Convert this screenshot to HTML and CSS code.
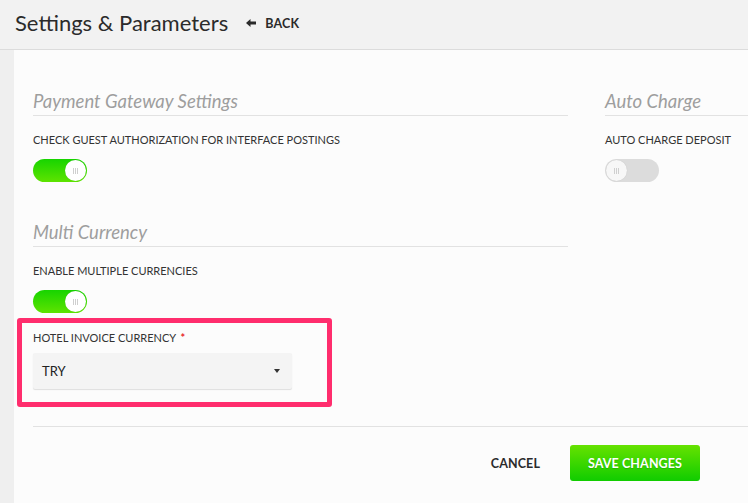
FILE: index.html
```html
<!DOCTYPE html>
<html>
<head>
<meta charset="utf-8">
<link rel="stylesheet" href="styles.css">
</head>
<body>
<header class="topbar">
  <h1 class="title">Settings &amp; Parameters</h1>
  <a class="back"><svg class="arrow" width="10" height="8" viewBox="0 0 10 8"><path d="M0 4 L4.5 0 L4.5 2.6 L10 2.6 L10 5.4 L4.5 5.4 L4.5 8 Z" fill="#2b2b2b"/></svg>BACK</a>
</header>
<div class="main">
  <div class="strip"></div>
  <div class="panel">
    <div class="cols">
      <div class="col-left">
        <section class="group">
          <h2 class="group-title">Payment Gateway Settings</h2>
          <div class="field-label">CHECK GUEST AUTHORIZATION FOR INTERFACE POSTINGS</div>
          <div class="toggle on"><span class="knob"><i></i><i></i><i></i></span></div>
        </section>
        <section class="group group-2">
          <h2 class="group-title">Multi Currency</h2>
          <div class="field-label">ENABLE MULTIPLE CURRENCIES</div>
          <div class="toggle on"><span class="knob"><i></i><i></i><i></i></span></div>
          <div class="highlight">
            <div class="field-label sel-label">HOTEL INVOICE CURRENCY <span class="req">*</span></div>
            <div class="select"><span>TRY</span><span class="caret"></span></div>
          </div>
        </section>
      </div>
      <div class="col-right">
        <section class="group">
          <h2 class="group-title">Auto Charge</h2>
          <div class="field-label">AUTO CHARGE DEPOSIT</div>
          <div class="toggle off"><span class="knob"><i></i><i></i><i></i></span></div>
        </section>
      </div>
    </div>
    <div class="footer">
      <button class="btn-cancel">CANCEL</button>
      <button class="btn-save">SAVE CHANGES</button>
    </div>
  </div>
</div>
</body>
</html>
```
FILE: styles.css
```css
* { box-sizing: border-box; }
html, body { margin: 0; padding: 0; }
body {
  width: 748px;
  height: 503px;
  overflow: hidden;
  font-family: Lato, "Open Sans", sans-serif;
  background: #f1f1f1;
  color: #333;
}
.topbar {
  height: 50px;
  display: flex;
  align-items: center;
  padding-left: 15px;
  background: #f2f2f2;
  border-bottom: 1px solid #dcdcdc;
  box-shadow: 0 1px 0 #f7f7f7;
}
.title {
  margin: 0;
  font-size: 22px;
  font-weight: 400;
  color: #2b2b2b;
  line-height: 26px;
  margin-top: -3px;
}
.back {
  margin-left: 18px;
  margin-top: -3px;
  font-size: 12.5px;
  font-weight: 700;
  color: #2b2b2b;
  display: flex;
  align-items: center;
  letter-spacing: 0.2px;
}
.arrow { margin-right: 9px; }
.main {
  display: flex;
  height: 453px;
}
.strip {
  width: 14px;
  background: #efefef;
}
.panel {
  flex: 1;
  background: #fcfcfc;
  padding: 39px 0 0 19px;
}
.cols {
  display: grid;
  grid-template-columns: 535px 1fr;
  column-gap: 37px;
}
.group-title {
  margin: 0;
  font-size: 18.5px;
  font-style: italic;
  font-weight: 400;
  color: #9e9e9e;
  line-height: 24px;
  padding-bottom: 2px;
  border-bottom: 1px solid #e2e2e2;
}
.field-label {
  font-size: 11px;
  line-height: 14px;
  margin-top: 17px;
  color: #333;
}
.toggle {
  margin-top: 12px;
  width: 54px;
  height: 23px;
  border-radius: 12px;
  position: relative;
}
.toggle.on {
  background: linear-gradient(#17d400, #5ee300);
}
.toggle.off {
  background: #dcdcdc;
}
.knob {
  position: absolute;
  top: 1px;
  width: 21px;
  height: 21px;
  border-radius: 50%;
  background: #fff;
  display: flex;
  justify-content: center;
  align-items: center;
  gap: 1px;
  box-shadow: 0 0 1px rgba(0,0,0,0.15);
}
.toggle.on .knob { right: 1px; }
.toggle.off .knob { left: 1px; background: #f7f7f7; }
.knob i {
  display: block;
  width: 1px;
  height: 6px;
  background: #cfcfcf;
}
.group-2 { margin-top: 38px; }
.highlight {
  margin: 5px 0 0 -16px;
  width: 315px;
  height: 89px;
  border: 5px solid #ff2d6d;
  border-radius: 3px;
  padding: 0 0 0 11px;
}
.sel-label { margin-top: 8px; }
.req { color: #e8262b; font-weight: 700; margin-left: 2px; }
.select {
  margin-top: 8px;
  width: 259px;
  height: 36px;
  background: #f4f4f4;
  border-radius: 2px;
  box-shadow: 0 1px 1px rgba(0,0,0,0.12);
  display: flex;
  align-items: center;
  justify-content: space-between;
  padding: 0 12px 0 9px;
  font-size: 13px;
  color: #222;
}
.caret {
  width: 0;
  height: 0;
  border-left: 3px solid transparent;
  border-right: 3px solid transparent;
  border-top: 4px solid #333;
}
.footer {
  margin-top: 19px;
  border-top: 1px solid #e2e2e2;
  display: flex;
  justify-content: flex-end;
  align-items: center;
  padding: 18px 48px 0 0;
}
.btn-cancel {
  background: none;
  border: 0;
  font-family: inherit;
  font-size: 12.5px;
  font-weight: 700;
  color: #2b2b2b;
  margin-right: 30px;
  padding: 0;
  letter-spacing: 0.1px;
}
.btn-save {
  width: 130px;
  height: 36px;
  border: 0;
  border-radius: 3px;
  background: linear-gradient(#66e200, #10cc00);
  color: #fff;
  font-family: inherit;
  font-size: 12.5px;
  font-weight: 700;
  letter-spacing: 0.1px;
  text-shadow: 0 1px 1px rgba(0,0,0,0.15);
}
```
